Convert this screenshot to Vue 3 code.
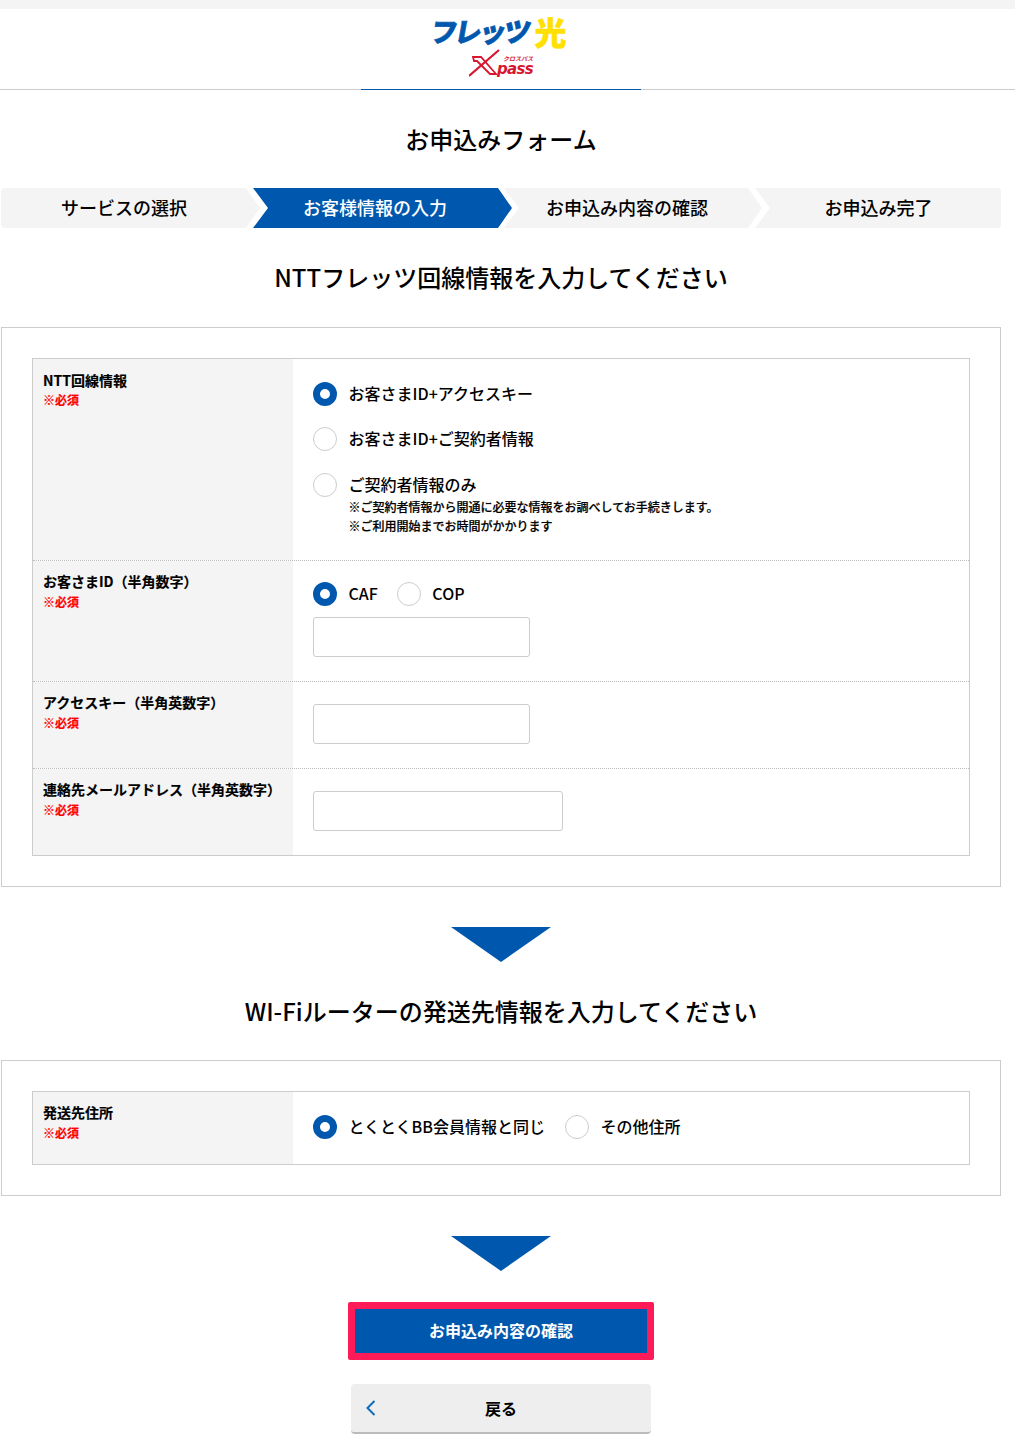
<script setup>
const steps = [
  { label: 'サービスの選択', cls: 'first' },
  { label: 'お客様情報の入力', cls: 'active' },
  { label: 'お申込み内容の確認', cls: 'third' },
  { label: 'お申込み完了', cls: 'last' }
]
</script>

<template>
  <div class="page">
    <div class="topbar"></div>
    <header class="header">
      <div class="logo">
        <div class="flets"><span class="fl">フレッツ</span><span class="hikari">光</span></div>
        <div class="xpass">
          <svg class="xmark" width="36" height="28" viewBox="0 0 36 28" aria-hidden="true">
            <path d="M4 8h8l15 17h-6L8 12H5z" fill="#fff" stroke="#d7162f" stroke-width="1.8" />
            <path d="M0 27 L30 1" fill="none" stroke="#d7162f" stroke-width="2.2" />
          </svg>
          <div class="xtext"><span class="xkana">クロスパス</span><span class="xword">pass</span></div>
        </div>
      </div>
      <div class="rule"></div>
    </header>

    <main class="main">
      <h1 class="title">お申込みフォーム</h1>
      <ol class="steps">
        <li v-for="s in steps" :key="s.label" class="step" :class="s.cls">{{ s.label }}</li>
      </ol>

      <h2 class="heading h-first">NTTフレッツ回線情報を入力してください</h2>
      <section class="panel">
        <div class="table">
          <div class="row r1">
            <div class="th th-first"><div class="lab">NTT回線情報</div><div class="req">※必須</div></div>
            <div class="td td-stack">
              <label class="opt"><input type="radio" name="a" checked /><span>お客さまID+アクセスキー</span></label>
              <label class="opt"><input type="radio" name="a" /><span>お客さまID+ご契約者情報</span></label>
              <label class="opt"><input type="radio" name="a" /><span>ご契約者情報のみ</span></label>
              <div class="note">※ご契約者情報から開通に必要な情報をお調べしてお手続きします。<br />※ご利用開始までお時間がかかります</div>
            </div>
          </div>
          <div class="row r2">
            <div class="th"><div class="lab">お客さまID（半角数字）</div><div class="req">※必須</div></div>
            <div class="td">
              <div class="inline tight">
                <label class="opt"><input type="radio" name="b" checked /><span>CAF</span></label>
                <label class="opt"><input type="radio" name="b" /><span>COP</span></label>
              </div>
              <input class="text w217 mt" type="text" />
            </div>
          </div>
          <div class="row r3">
            <div class="th"><div class="lab">アクセスキー（半角英数字）</div><div class="req">※必須</div></div>
            <div class="td field"><input class="text w217" type="text" /></div>
          </div>
          <div class="row r3">
            <div class="th"><div class="lab">連絡先メールアドレス（半角英数字）</div><div class="req">※必須</div></div>
            <div class="td field"><input class="text w250" type="text" /></div>
          </div>
        </div>
      </section>

      <div class="arrow a1"></div>

      <h2 class="heading h-second">WI-Fiルーターの発送先情報を入力してください</h2>
      <section class="panel">
        <div class="table">
          <div class="row r5">
            <div class="th"><div class="lab">発送先住所</div><div class="req">※必須</div></div>
            <div class="td td-center">
              <div class="inline">
                <label class="opt"><input type="radio" name="c" checked /><span>とくとくBB会員情報と同じ</span></label>
                <label class="opt"><input type="radio" name="c" /><span>その他住所</span></label>
              </div>
            </div>
          </div>
        </div>
      </section>

      <div class="arrow a2"></div>

      <button class="confirm" type="button">お申込み内容の確認</button>
      <button class="back" type="button">
        <svg class="chev" width="10" height="16" viewBox="0 0 10 16" aria-hidden="true">
          <path d="M8.5 1 L1.5 8 L8.5 15" fill="none" stroke="#0f6ab8" stroke-width="2" />
        </svg>
        戻る
      </button>
    </main>
  </div>
</template>

<style>
html, body { margin: 0; padding: 0; background: #fff; }
</style>

<style scoped>
.page {
  width: 1015px;
  height: 1446px;
  overflow: hidden;
  font-family: "Noto Sans CJK JP", "Noto Sans", sans-serif;
  color: #000;
}
.topbar { height: 9px; background: #f4f4f4; }
.header { height: 81px; display: flex; flex-direction: column; }
.logo { height: 80px; width: 140px; margin-left: 431px; display: flex; flex-direction: column; align-items: center; }
.flets {
  font-size: 27px;
  line-height: 34px;
  height: 34px;
  margin-top: 5px;
  margin-right: 4px;
  font-weight: 900;
  white-space: nowrap;
  display: flex;
  align-items: center;
}
.fl { color: #0058ae; display: block; transform: skewX(-10deg); letter-spacing: -2.7px; -webkit-text-stroke: 0.7px #0058ae; }
.hikari { color: #ffe000; font-size: 32px; margin-left: 6px; -webkit-text-stroke: 0.5px #ffe000; }
.xpass { position: relative; width: 66px; height: 28px; margin-top: 1px; margin-left: 2px; }
.xmark { position: absolute; left: 0; top: 0; }
.xtext { position: absolute; left: 27px; top: 6px; display: flex; flex-direction: column; align-items: flex-end; width: 37px; }
.xkana { font-size: 6px; line-height: 7px; color: #d7162f; font-style: italic; font-weight: 700; white-space: nowrap; }
.xword { font-family: "DejaVu Sans", sans-serif; font-size: 15px; line-height: 12px; margin-top: 1px; font-style: italic; font-weight: 700; color: #d7162f; letter-spacing: -0.7px; }
.rule { height: 1px; background: linear-gradient(to right, #ccc 361px, #0058ae 361px, #0058ae 641px, #ccc 641px); }

.main { width: 1000px; margin-left: 1px; display: flex; flex-direction: column; align-items: center; }
.title { margin: 31px 0 31px; font-size: 24px; line-height: 36px; height: 36px; font-weight: 500; }
.steps { list-style: none; margin: 0; padding: 0; display: flex; width: 1000px; }
.step {
  height: 40px;
  line-height: 38px;
  text-align: center;
  font-size: 18px;
  font-weight: 500;
  background: #f4f4f4;
  width: 259px;
  box-sizing: border-box;
  clip-path: polygon(0 0, calc(100% - 14px) 0, 100% 50%, calc(100% - 14px) 100%, 0 100%, 15px 50%);
}
.step.first { clip-path: polygon(0 0, calc(100% - 14px) 0, 100% 50%, calc(100% - 14px) 100%, 0 100%); border-radius: 4px 0 0 4px; padding-right: 13px; margin-right: -7px; }
.step.active { background: #0058ae; color: #fff; margin-right: -8px; padding-right: 15px; }
.step.third { width: 258px; margin-right: -7px; padding-right: 12px; }
.step.last { width: 246px; clip-path: polygon(0 0, 100% 0, 100% 100%, 0 100%, 15px 50%); border-radius: 0 4px 4px 0; padding-left: 1px; }

.heading { margin: 0; font-size: 24px; line-height: 36px; font-weight: 500; }
.h-first { margin-top: 31px; margin-bottom: 32px; }
.h-second { margin-top: 31px; margin-bottom: 31px; }

.panel { width: 1000px; box-sizing: border-box; border: 1px solid #ccc; padding: 30px; }
.table { border: 1px solid #ccc; }
.row { display: grid; grid-template-columns: 260px 1fr; border-bottom: 1px dotted #bbb; box-sizing: border-box; }
.row:last-child { border-bottom: 0; }
.r1 { height: 202px; }
.r2 { height: 121px; }
.r3 { height: 87px; }
.r3:last-child { height: 86px; }
.r5 { height: 72px; }
.th { background: #f4f4f4; padding: 9px 10px 0; }
.th-first { padding-top: 10px; }
.lab { font-size: 14px; line-height: 22px; margin-bottom: 1px; font-weight: 700; -webkit-text-stroke: 0.15px #000; }
.th-first .lab { margin-bottom: 0; }
.req { font-size: 12px; line-height: 18px; font-weight: 700; color: #f00; -webkit-text-stroke: 0.2px #f00; }
.td { padding: 21px 20px 0; }
.td-stack { display: flex; flex-direction: column; padding-top: 23px; }
.td-stack .opt { height: 24px; margin-bottom: 21px; }
.td-stack .opt:nth-child(2) { margin-bottom: 22px; }
.td-stack .opt:nth-child(3) { margin-bottom: 0; }
.td-center { padding-top: 23px; }
.field { padding-top: 22px; }
.opt { display: inline-flex; align-items: center; gap: 11.5px; font-size: 16px; line-height: 24px; font-weight: 500; }
.opt span { padding-bottom: 2px; }
.opt input {
  appearance: none;
  width: 24px;
  height: 24px;
  margin: 0;
  border: 1px solid #ccc;
  border-radius: 50%;
  background: #fff;
  box-sizing: border-box;
}
.opt input:checked { border: 7px solid #0058ae; }
.inline { display: flex; gap: 20px; height: 24px; }
.inline.tight { gap: 19px; }
.note { font-size: 12px; line-height: 19px; font-weight: 500; margin: 0 0 0 35.5px; -webkit-text-stroke: 0.2px #000; }
.text { display: block; height: 40px; box-sizing: border-box; border: 1px solid #ccc; border-radius: 3px; background: #fff; padding: 0 8px; }
.w217 { width: 217px; }
.w250 { width: 250px; }
.mt { margin-top: 11px; }

.arrow { width: 0; height: 0; border-left: 50px solid transparent; border-right: 50px solid transparent; border-top: 35px solid #0058ae; }
.a1 { margin-top: 40px; }
.a2 { margin-top: 40px; }

.confirm {
  margin-top: 31px;
  width: 306px;
  height: 58px;
  box-sizing: border-box;
  border: 7px solid #ff1a58;
  border-radius: 2px;
  background: #0058ae;
  color: #fff;
  font-family: inherit;
  font-size: 16px;
  font-weight: 700;
  padding: 0 0 2px;
}
.back {
  position: relative;
  margin-top: 24px;
  width: 300px;
  height: 50px;
  box-sizing: border-box;
  border: 0;
  border-bottom: 2px solid #bbb;
  border-radius: 4px;
  background: #eee;
  color: #000;
  font-family: inherit;
  font-size: 16px;
  font-weight: 700;
  padding: 0;
}
.chev { position: absolute; left: 15px; top: 16px; }
</style>
